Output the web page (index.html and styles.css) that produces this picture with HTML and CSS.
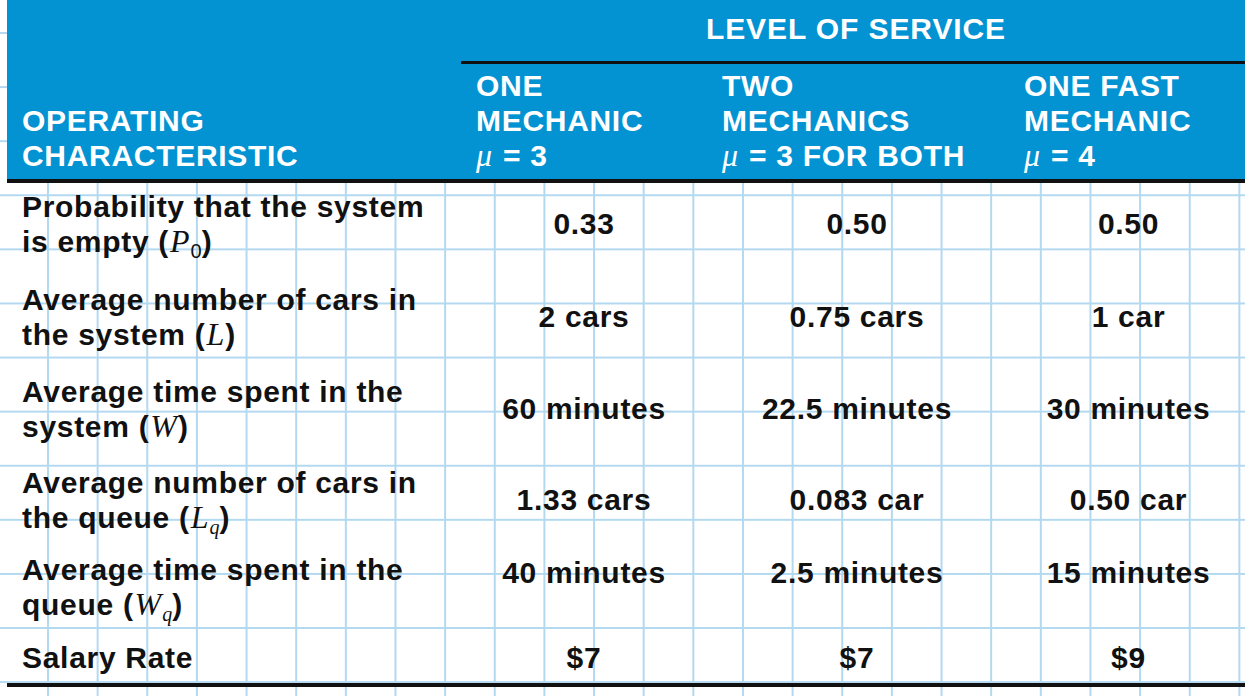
FILE: index.html
```html
<!DOCTYPE html>
<html lang="en">
<head>
<meta charset="utf-8">
<title>Level of Service</title>
<link rel="stylesheet" href="styles.css">
</head>
<body>
<div class="sheet">
  <div class="thead">
    <div class="th th-op">OPERATING<br>CHARACTERISTIC</div>
    <div class="th th-level">LEVEL OF SERVICE</div>
    <div class="th th-col">ONE<br>MECHANIC<br><span class="mu">μ</span> = 3</div>
    <div class="th th-col">TWO<br>MECHANICS<br><span class="mu">μ</span> = 3 FOR BOTH</div>
    <div class="th th-col th-last">ONE FAST<br>MECHANIC<br><span class="mu">μ</span> = 4</div>
  </div>
  <div class="tbody">
    <div class="row r1">
      <div class="label">Probability that the system<br>is empty (<span class="m">P</span><sub class="sub-sans">0</sub>)</div>
      <div class="val">0.33</div>
      <div class="val">0.50</div>
      <div class="val val-last">0.50</div>
    </div>
    <div class="row r2">
      <div class="label">Average number of cars in<br>the system (<span class="m">L</span>)</div>
      <div class="val">2 cars</div>
      <div class="val">0.75 cars</div>
      <div class="val val-last">1 car</div>
    </div>
    <div class="row r3">
      <div class="label">Average time spent in the<br>system (<span class="m">W</span>)</div>
      <div class="val">60 minutes</div>
      <div class="val">22.5 minutes</div>
      <div class="val val-last">30 minutes</div>
    </div>
    <div class="row r4">
      <div class="label">Average number of cars in<br>the queue (<span class="m">L</span><sub class="sub-m">q</sub>)</div>
      <div class="val">1.33 cars</div>
      <div class="val">0.083 car</div>
      <div class="val val-last">0.50 car</div>
    </div>
    <div class="row r5">
      <div class="label">Average time spent in the<br>queue (<span class="m">W</span><sub class="sub-m">q</sub>)</div>
      <div class="val val-top">40 minutes</div>
      <div class="val val-top">2.5 minutes</div>
      <div class="val val-top val-last">15 minutes</div>
    </div>
    <div class="row r6">
      <div class="label">Salary Rate</div>
      <div class="val val-single">$7</div>
      <div class="val val-single">$7</div>
      <div class="val val-single val-last">$9</div>
    </div>
  </div>
</div>
</body>
</html>
```

FILE: styles.css
```css
html, body {
  margin: 0;
  padding: 0;
}

body {
  width: 1245px;
  height: 696px;
  overflow: hidden;
  background-color: #ffffff;
  background-image:
    linear-gradient(to right, #b2d9f0 0, #b2d9f0 2px, transparent 2px),
    linear-gradient(to bottom, #b2d9f0 0, #b2d9f0 2px, transparent 2px);
  background-size: 49.65px 54.1px;
  background-position: 47px 32px;
  font-family: "Liberation Sans", Arial, sans-serif;
  font-weight: bold;
  font-size: 30px;
  letter-spacing: 0.7px;
  color: #111111;
}

.sheet {
  margin-left: 7px;
}

.thead {
  display: grid;
  grid-template-columns: 454px 246px 300px 1fr;
  grid-template-rows: 64px 115px;
  background: #0393d2;
  color: #ffffff;
  border-bottom: 4px solid #111111;
  line-height: 35px;
}

.th-op {
  grid-row: 1 / 3;
  grid-column: 1;
  align-self: end;
  padding: 0 0 6px 15px;
}

.th-level {
  grid-row: 1;
  grid-column: 2 / 5;
  box-sizing: border-box;
  border-bottom: 3px solid #111111;
  text-align: center;
  padding-top: 11px;
  padding-left: 6px;
  letter-spacing: 0.9px;
}

.th-col {
  grid-row: 2;
  align-self: end;
  padding: 0 0 6px 15px;
  white-space: nowrap;
}

.th-last {
  padding-left: 17px;
}

.mu {
  font-family: "Liberation Serif", "Times New Roman", serif;
  font-style: italic;
  font-weight: normal;
  font-size: 32px;
  letter-spacing: 0;
  margin-right: 2px;
}

.tbody {
  padding-top: 6px;
  padding-bottom: 8px;
  border-bottom: 4px solid #111111;
}

.row {
  display: grid;
  grid-template-columns: 454px 246px 300px 1fr;
  align-items: start;
  line-height: 35px;
}

.r1 { height: 93px; }
.r2 { height: 92px; }
.r3 { height: 91px; }
.r4 { height: 87px; }
.r5 { height: 88px; }
.r6 { height: 35px; }

.label {
  padding-left: 15px;
  white-space: nowrap;
}

.val {
  text-align: center;
  line-height: 70px;
  white-space: nowrap;
}

.val-last {
  padding-left: 5px;
}

.val-top {
  line-height: 35px;
  padding-top: 3px;
}

.val-single {
  line-height: 35px;
}

.m {
  font-family: "Liberation Serif", "Times New Roman", serif;
  font-style: italic;
  font-weight: normal;
  font-size: 32px;
  letter-spacing: 0;
  padding: 0 1px;
}

.sub-sans,
.sub-m {
  font-size: 20px;
  line-height: 0;
  vertical-align: -6px;
  letter-spacing: 0;
}

.sub-sans {
  font-weight: normal;
}

.sub-m {
  font-family: "Liberation Serif", "Times New Roman", serif;
  font-style: italic;
  font-weight: normal;
}
```
